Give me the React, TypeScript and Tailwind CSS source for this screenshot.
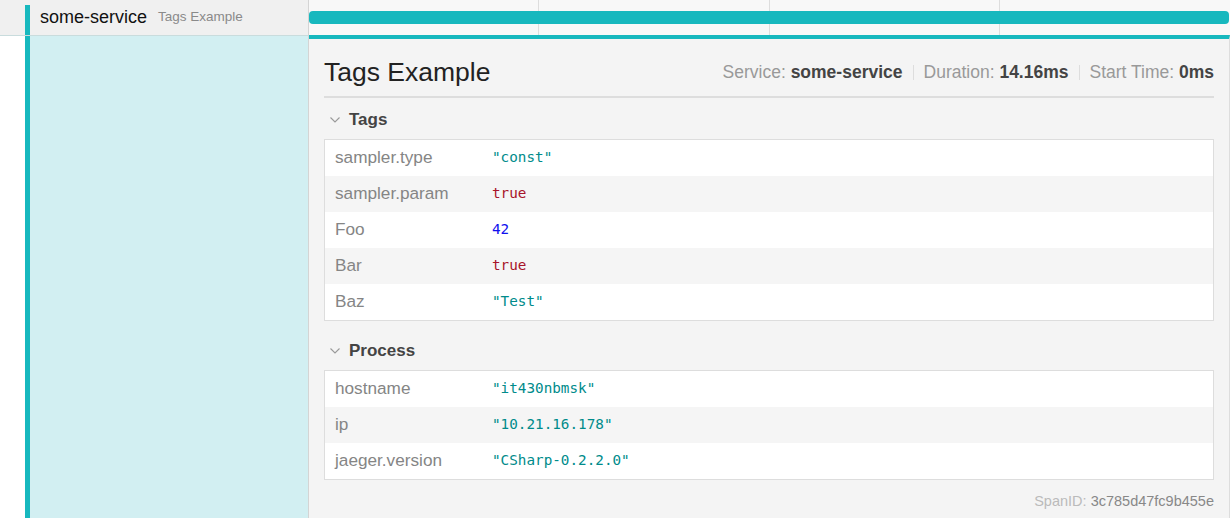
type Kind = 'str' | 'bool' | 'num'

interface KV {
  k: string
  v: string
  t: Kind
}

const tags: KV[] = [
  { k: 'sampler.type', v: '"const"', t: 'str' },
  { k: 'sampler.param', v: 'true', t: 'bool' },
  { k: 'Foo', v: '42', t: 'num' },
  { k: 'Bar', v: 'true', t: 'bool' },
  { k: 'Baz', v: '"Test"', t: 'str' },
]

const processTags: KV[] = [
  { k: 'hostname', v: '"it430nbmsk"', t: 'str' },
  { k: 'ip', v: '"10.21.16.178"', t: 'str' },
  { k: 'jaeger.version', v: '"CSharp-0.2.2.0"', t: 'str' },
]

const valueColor: Record<Kind, string> = {
  str: 'text-[#008b8b]',
  bool: 'text-[#a8142a]',
  num: 'text-[#1010ee]',
}

function Chevron() {
  return (
    <svg width="10" height="6" viewBox="0 0 10 6" className="text-[#999]">
      <polyline points="0.5,0.5 5,5 9.5,0.5" fill="none" stroke="currentColor" strokeWidth="1.1" />
    </svg>
  )
}

function KVTable({ rows }: { rows: KV[] }) {
  return (
    <div className="border border-[#ddd] bg-white">
      {rows.map((row, i) => (
        <div
          key={row.k}
          className={`flex h-[36px] items-center ${i % 2 === 1 ? 'bg-[#f5f5f5]' : 'bg-white'}`}
        >
          <div className="w-[167px] shrink-0 pl-[10px] text-[17.2px] text-[#858585]">{row.k}</div>
          <div className={`font-['DejaVu_Sans_Mono',monospace] text-[14.3px] ${valueColor[row.t]}`}>
            {row.v}
          </div>
        </div>
      ))}
    </div>
  )
}

function Section({ title, rows, className }: { title: string; rows: KV[]; className: string }) {
  return (
    <div className={className}>
      <div className="flex h-[38px] items-center pl-[6px]">
        <Chevron />
        <span className="ml-[9px] text-[17px] font-bold text-[#444]">{title}</span>
      </div>
      <KVTable rows={rows} />
    </div>
  )
}

export default function App() {
  return (
    <div className="flex min-h-screen flex-col bg-white font-['Liberation_Sans',Arial,sans-serif]">
      {/* span row */}
      <div className="flex h-[35px]">
        <div className="flex w-[309px] shrink-0 border-r border-[#d4d4d4] bg-[#f0f0f0]">
          <div className="w-[25px] shrink-0" />
          <div className="mt-[5px] w-[5px] shrink-0 bg-[#17b8be]" />
          <div className="flex items-center pl-[10px]">
            <span className="text-[18px] text-[#111]">some-service</span>
            <span className="ml-[11px] text-[13.5px] text-[#8a8a8a]">Tags Example</span>
          </div>
        </div>
        <div className="relative flex flex-1 items-center bg-[#f8f8f8]">
          <div className="absolute inset-y-0 left-[229px] w-px bg-[#ddd]" />
          <div className="absolute inset-y-0 left-[460px] w-px bg-[#ddd]" />
          <div className="absolute inset-y-0 left-[690px] w-px bg-[#ddd]" />
          <div className="relative mr-px h-[13px] flex-1 rounded-[4px] bg-[#17b8be]" />
        </div>
      </div>

      {/* detail row */}
      <div className="flex flex-1">
        <div className="flex w-[309px] shrink-0 border-t border-r border-t-[#c9dcdd] border-r-[#d4d4d4]">
          <div className="w-[25px] shrink-0 bg-white" />
          <div className="w-[5px] shrink-0 bg-[#17b8be]" />
          <div className="flex-1 bg-[#d2eff2]" />
        </div>
        <div className="flex-1 border-t-4 border-r border-t-[#17b8be] border-r-[#ddd] bg-[#f4f4f4] pl-[15px] pr-[15px] pb-[20px]">
          <div className="flex h-[57px] items-center justify-between pt-[10px]">
            <h1 className="text-[26.5px] text-[#222]">Tags Example</h1>
            <div className="flex items-center text-[17.5px] text-[#999]">
              <span>
                Service: <strong className="text-[#444]">some-service</strong>
              </span>
              <span className="mx-[10px] h-[15px] w-px bg-[#ddd]" />
              <span>
                Duration: <strong className="text-[#444]">14.16ms</strong>
              </span>
              <span className="mx-[10px] h-[15px] w-px bg-[#ddd]" />
              <span>
                Start Time: <strong className="text-[#444]">0ms</strong>
              </span>
            </div>
          </div>
          <div className="h-[2px] bg-[#ddd]" />

          <Section title="Tags" rows={tags} className="pt-[3px]" />
          <Section title="Process" rows={processTags} className="mt-[11px]" />

          <div className="mt-[12px] text-right text-[14.5px] leading-[18px]">
            <span className="text-[#bbb]">SpanID: </span>
            <span className="text-[#888]">3c785d47fc9b455e</span>
          </div>
        </div>
      </div>
    </div>
  )
}
